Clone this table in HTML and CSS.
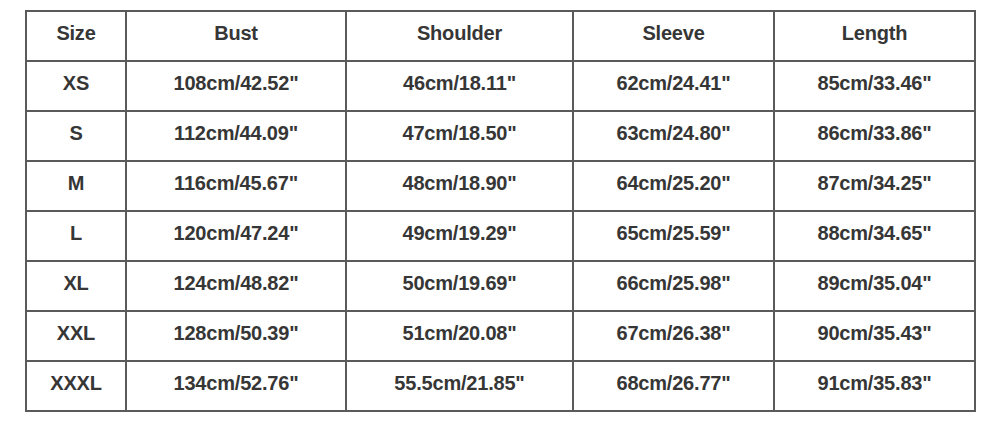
FILE: index.html
```html
<!DOCTYPE html>
<html>
<head>
<meta charset="utf-8">
<link rel="stylesheet" href="styles.css">
</head>
<body>
<table class="size-table">
  <colgroup>
    <col class="c-size"><col class="c-bust"><col class="c-shoulder"><col class="c-sleeve"><col class="c-length">
  </colgroup>
  <tr><td>Size</td><td>Bust</td><td>Shoulder</td><td>Sleeve</td><td>Length</td></tr>
  <tr><td>XS</td><td>108cm/42.52"</td><td>46cm/18.11"</td><td>62cm/24.41"</td><td>85cm/33.46"</td></tr>
  <tr><td>S</td><td>112cm/44.09"</td><td>47cm/18.50"</td><td>63cm/24.80"</td><td>86cm/33.86"</td></tr>
  <tr><td>M</td><td>116cm/45.67"</td><td>48cm/18.90"</td><td>64cm/25.20"</td><td>87cm/34.25"</td></tr>
  <tr><td>L</td><td>120cm/47.24"</td><td>49cm/19.29"</td><td>65cm/25.59"</td><td>88cm/34.65"</td></tr>
  <tr><td>XL</td><td>124cm/48.82"</td><td>50cm/19.69"</td><td>66cm/25.98"</td><td>89cm/35.04"</td></tr>
  <tr><td>XXL</td><td>128cm/50.39"</td><td>51cm/20.08"</td><td>67cm/26.38"</td><td>90cm/35.43"</td></tr>
  <tr><td>XXXL</td><td>134cm/52.76"</td><td>55.5cm/21.85"</td><td>68cm/26.77"</td><td>91cm/35.83"</td></tr>
</table>
</body>
</html>
```
FILE: styles.css
```css
html, body {
  margin: 0;
  padding: 0;
  background: #ffffff;
}
body {
  padding: 10px 0 0 25px;
  font-family: "Liberation Sans", Arial, sans-serif;
}
.size-table {
  border-collapse: collapse;
  table-layout: fixed;
  width: 949px;
}
.size-table td {
  border: 2px solid #5a5a5a;
  height: 43px;
  padding: 0 0 5px 0;
  text-align: center;
  vertical-align: middle;
  font-size: 20px;
  font-weight: bold;
  color: #363636;
  letter-spacing: -0.2px;
}
.c-size { width: 100px; }
.c-bust { width: 220px; }
.c-shoulder { width: 227px; }
.c-sleeve { width: 201px; }
.c-length { width: 201px; }
```
